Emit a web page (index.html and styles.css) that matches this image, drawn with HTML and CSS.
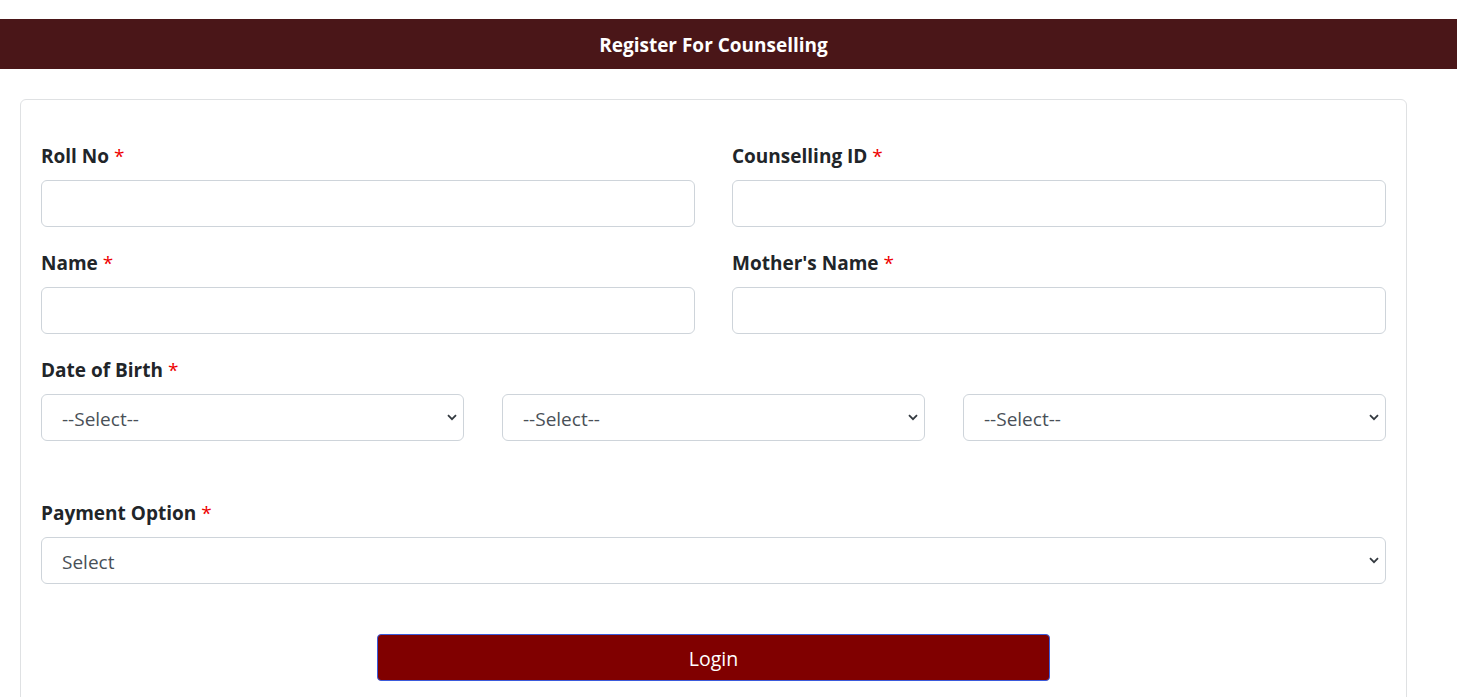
FILE: index.html
```html
<!DOCTYPE html>
<html lang="en">
<head>
<meta charset="utf-8">
<title>Register For Counselling</title>
<link rel="stylesheet" href="styles.css">
</head>
<body>
<header class="topbar"><h1 class="topbar-title">Register For Counselling</h1></header>
<main class="page">
  <form class="card">
    <div class="grid-2">
      <div class="field">
        <label class="label">Roll No <span class="req">*</span></label>
        <input class="control" type="text">
      </div>
      <div class="field">
        <label class="label">Counselling ID <span class="req">*</span></label>
        <input class="control" type="text">
      </div>
      <div class="field">
        <label class="label">Name <span class="req">*</span></label>
        <input class="control" type="text">
      </div>
      <div class="field">
        <label class="label">Mother's Name <span class="req">*</span></label>
        <input class="control" type="text">
      </div>
    </div>
    <div class="field dob">
      <label class="label">Date of Birth <span class="req">*</span></label>
      <div class="grid-3">
        <select class="control select"><option>--Select--</option></select>
        <select class="control select"><option>--Select--</option></select>
        <select class="control select"><option>--Select--</option></select>
      </div>
    </div>
    <div class="field payment">
      <label class="label">Payment Option <span class="req">*</span></label>
      <select class="control select"><option>Select</option></select>
    </div>
    <div class="actions">
      <button class="btn" type="button">Login</button>
    </div>
  </form>
</main>
</body>
</html>
```
FILE: styles.css
```css
html, body {
  margin: 0;
  padding: 0;
  background: #fff;
}
body {
  font-family: "Open Sans", "Noto Sans", "Liberation Sans", sans-serif;
  color: #212529;
  width: 1457px;
  overflow: hidden;
}
.topbar {
  margin-top: 19px;
  height: 50px;
  background: #4a1618;
  display: flex;
  align-items: center;
  justify-content: center;
  padding-right: 30px;
  padding-top: 2px;
  box-sizing: border-box;
}
.topbar-title {
  margin: 0;
  color: #fff;
  font-size: 19px;
  font-weight: 700;
}
.page {
  width: 1427px;
  padding: 30px 20px 0 20px;
  box-sizing: border-box;
}
.card {
  border: 1px solid #dfe1e3;
  border-radius: 6px;
  padding: 43px 20px 40px;
  min-height: 620px;
  box-sizing: border-box;
}
.grid-2 {
  display: grid;
  grid-template-columns: 1fr 1fr;
  column-gap: 37px;
  row-gap: 23px;
}
.grid-3 {
  display: grid;
  grid-template-columns: 1fr 1fr 1fr;
  column-gap: 38px;
}
.field {
  display: flex;
  flex-direction: column;
}
.dob { margin-top: 23px; }
.payment { margin-top: 59px; }
.label {
  font-size: 19px;
  font-weight: 700;
  line-height: 27px;
  margin-bottom: 10px;
}
.req { color: #e00; font-weight: 400; }
.control {
  height: 47px;
  box-sizing: border-box;
  border: 1px solid #ced4da;
  border-radius: 6px;
  background: #fff;
  font-family: inherit;
  font-size: 19px;
  color: #495057;
  padding: 2px 30px 0 20px;
  width: 100%;
  outline: none;
}
.select {
  appearance: none;
  -webkit-appearance: none;
  background-image: url("data:image/svg+xml,%3Csvg xmlns='http://www.w3.org/2000/svg' width='10' height='7' viewBox='0 0 10 7'%3E%3Cpath d='M1 1.2 5 5.2 9 1.2' fill='none' stroke='%23343a40' stroke-width='1.8'/%3E%3C/svg%3E");
  background-repeat: no-repeat;
  background-position: right 6px center;
  background-size: 10px 7px;
}
.actions {
  display: flex;
  justify-content: center;
  margin-top: 50px;
}
.btn {
  width: 673px;
  height: 47px;
  background: #800000;
  color: #fff;
  border: 1px solid #3b5bdb;
  border-radius: 4px;
  font-family: inherit;
  font-size: 19.5px;
  padding-top: 2px;
}
```
